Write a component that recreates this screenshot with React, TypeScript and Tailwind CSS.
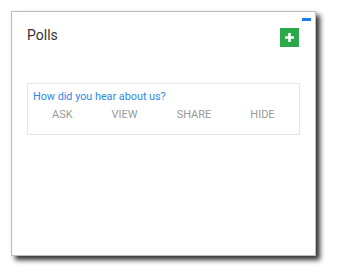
import React from "react";

const actions = ["ASK", "VIEW", "SHARE", "HIDE"];

const App = () => {
  return (
    <div className="w-[338px] h-[278px] bg-white pl-[11px] pt-[11px]" style={{ fontFamily: "Roboto, 'Liberation Sans', sans-serif" }}>
      <div className="relative w-[305px] h-[245px] bg-white border border-[#bdbdbd] shadow-[4px_4px_5px_rgba(0,0,0,0.8)]">
        {/* collapse bar */}
        <div className="absolute right-[4px] top-[6px] w-[9px] h-[3px] bg-[#1a7cf0]" />

        <div className="flex items-start justify-between pl-[15px] pr-[16px] pt-[15px]">
          <h2 className="text-[14px] leading-[16px] text-[#333]">Polls</h2>
          <button className="mt-[1px] w-[19px] h-[19px] bg-[#2aa84a] flex items-center justify-center">
            <svg width="9" height="9" viewBox="0 0 9 9">
              <path d="M3.2 0h2.6v3.2H9v2.6H5.8V9H3.2V5.8H0V3.2h3.2z" fill="#fff" />
            </svg>
          </button>
        </div>

        <div className="mx-[15px] mt-[36px] h-[52px] border border-[#e6e6e6] pl-[5px] pt-[6px]">
          <p className="text-[10.8px] leading-[13px] text-[#2f86ea]">How did you hear about us?</p>
          <div className="flex gap-[39px] pl-[19px] mt-[5px] text-[11px] leading-[13px] text-[#9a9a9a]">
            {actions.map((a) => (
              <span key={a}>{a}</span>
            ))}
          </div>
        </div>
      </div>
    </div>
  );
};

export default App;
